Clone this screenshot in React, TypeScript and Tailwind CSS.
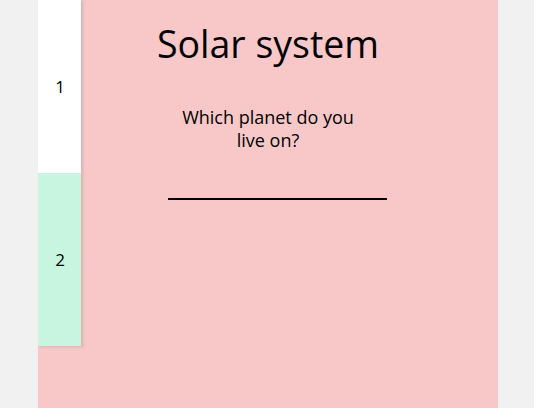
export default function App() {
  return (
    <div className="min-h-screen h-[408px] bg-[#f1f1f1] font-['Open_Sans',sans-serif] text-black">
      <div className="relative ml-[38px] w-[460px] h-full bg-[#f8c8c8] pt-[20px] flex flex-col items-center">
        <div className="absolute left-0 top-0 w-[43px] shadow-[2px_1px_3px_rgba(0,0,0,0.12)]">
          <div className="h-[173px] bg-white flex items-center justify-center pl-[1px] text-[17px]">
            1
          </div>
          <div className="h-[173px] bg-[#c8f5e0] flex items-center justify-center pl-[1px] text-[17px]">
            2
          </div>
        </div>
        <h1 className="text-[37.5px] leading-[48px]">Solar system</h1>
        <p className="mt-[38px] w-[190px] text-center text-[18px] leading-[23px]">
          Which planet do you live on?
        </p>
        <input
          type="text"
          className="mt-[31px] ml-[19px] w-[219px] h-[17px] bg-transparent border-b-2 border-black outline-none"
        />
      </div>
    </div>
  );
}
